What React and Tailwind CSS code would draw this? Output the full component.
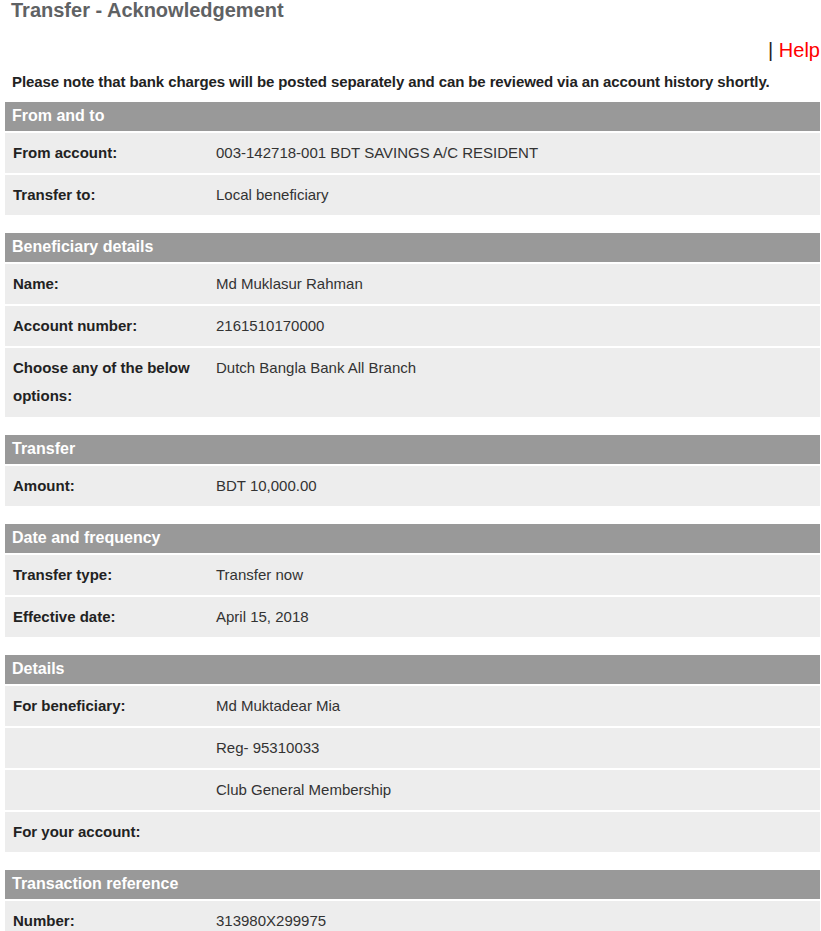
import React from 'react';

const sections = [
  {
    title: 'From and to',
    rows: [
      ['From account:', '003-142718-001 BDT SAVINGS A/C RESIDENT'],
      ['Transfer to:', 'Local beneficiary'],
    ],
  },
  {
    title: 'Beneficiary details',
    rows: [
      ['Name:', 'Md Muklasur Rahman'],
      ['Account number:', '2161510170000'],
      ['Choose any of the below options:', 'Dutch Bangla Bank All Branch'],
    ],
  },
  {
    title: 'Transfer',
    rows: [['Amount:', 'BDT 10,000.00']],
  },
  {
    title: 'Date and frequency',
    rows: [
      ['Transfer type:', 'Transfer now'],
      ['Effective date:', 'April 15, 2018'],
    ],
  },
  {
    title: 'Details',
    rows: [
      ['For beneficiary:', 'Md Muktadear Mia'],
      ['', 'Reg- 95310033'],
      ['', 'Club General Membership'],
      ['For your account:', ''],
    ],
  },
  {
    title: 'Transaction reference',
    rows: [['Number:', '313980X299975']],
  },
];

const Section = ({ title, rows }) => (
  <div className="mb-[18px]">
    <div className="h-[29px] bg-[#999999] px-[7px] text-[16px] font-bold leading-[28px] text-white">
      {title}
    </div>
    {rows.map(([label, value], i) => (
      <div key={i} className="mt-[2px] flex bg-[#ededed] pt-[6px] pb-[6px] text-[15px] leading-[28px] [&:has(.two)]:pb-[7px]">
        <div className={`w-[203px] shrink-0 pl-[8px] pr-[14px] font-bold text-[#222222] ${label.length > 25 ? 'two' : ''}`}>{label}</div>
        <div className="flex-1 pl-[8px] text-[#333333]">{value}</div>
      </div>
    ))}
  </div>
);

export default function App() {
  return (
    <div className="w-[821px] bg-white font-['Liberation_Sans',Arial,sans-serif]">
      <h1 className="pl-[11px] text-[20px] font-bold leading-[20px] text-[#5f6264]">
        Transfer - Acknowledgement
      </h1>
      <div className="mt-[18px] pr-[1px] text-right text-[20px] leading-[24px]">
        <span className="text-[#222222]">|</span> <span className="text-[#ff0000]">Help</span>
      </div>
      <p className="mt-[10px] pl-[12px] text-[15px] font-bold leading-[20px] tracking-[-0.1px] text-[#222222]">
        Please note that bank charges will be posted separately and can be reviewed via an account history shortly.
      </p>
      <div className="mt-[10px] pl-[5px] pr-[1px]">
        {sections.map((s) => (
          <Section key={s.title} {...s} />
        ))}
      </div>
    </div>
  );
}
